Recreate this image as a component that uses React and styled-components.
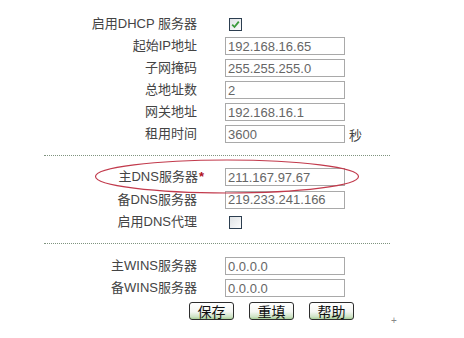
import React from "react";
import styled, { createGlobalStyle } from "styled-components";

const Global = createGlobalStyle`
  html, body { margin: 0; padding: 0; background: #fff; }
  body { font-family: "Liberation Sans", "Noto Sans CJK SC", sans-serif; font-size: 13px; color: #444; }
`;

const Page = styled.div`
  position: relative;
  width: 464px;
  height: 338px;
  padding-top: 15px;
  box-sizing: border-box;
`;

const Section = styled.div`
  display: flex;
  flex-direction: column;
  gap: ${(p) => p.$gap || 4}px;
`;

const Row = styled.div`
  display: flex;
  align-items: center;
  height: 18px;
`;

const Label = styled.div`
  flex: none;
  width: 197px;
  text-align: right;
  white-space: nowrap;
  color: #444;
  line-height: 18px;
`;

const Star = styled.span`
  color: #b01020;
  font-weight: bold;
  margin-right: -7px;
  margin-left: 1px;
`;

const Field = styled.div`
  display: flex;
  align-items: center;
  margin-left: 28px;
`;

const Input = styled.input`
  box-sizing: border-box;
  width: 120px;
  height: 18px;
  border: 1px solid #a9a9a9;
  padding: 0 2px;
  font-family: "Liberation Sans", "Noto Sans CJK SC", sans-serif;
  font-size: 13px;
  color: #666;
  background: #fff;
  outline: none;
`;

const Unit = styled.span`
  margin-left: 4px;
  color: #444;
`;

const Box = styled.span`
  box-sizing: border-box;
  display: inline-flex;
  align-items: center;
  justify-content: center;
  width: 13px;
  height: 13px;
  margin-left: 4px;
  border: 1px solid #2c3e50;
  background: linear-gradient(135deg, #dfe3e6, #fbfbfb);
`;

const Divider = styled.div`
  margin: ${(p) => p.$top}px 0 ${(p) => p.$bottom}px 44px;
  width: 346px;
  border-top: 1px dotted #7f937f;
`;

const Buttons = styled.div`
  display: flex;
  align-items: center;
  gap: 15px;
  margin-top: 5px;
  margin-left: 189px;
`;

const Button = styled.button`
  box-sizing: border-box;
  width: 45px;
  height: 18px;
  padding: 0;
  border: 1px solid #2d2d2d;
  border-radius: 3px;
  background: linear-gradient(#ffffff 0%, #f4f6f2 55%, #cfe3c6 85%, #a8cf98 100%);
  font-family: "Noto Sans CJK SC", sans-serif;
  font-size: 14px;
  line-height: 15px;
  color: #111;
`;

const Plus = styled.span`
  align-self: flex-end;
  margin: 0 0 -6px 22px;
  font-size: 10px;
  color: #888;
`;

const Ellipse = styled.svg`
  position: absolute;
  left: 94px;
  top: 159px;
  pointer-events: none;
`;

const Check = () => (
  <svg width="9" height="9" viewBox="0 0 9 9">
    <path d="M1.2 4.6 L3.5 7 L7.8 1.6" fill="none" stroke="#3a9a3a" strokeWidth="1.8" />
  </svg>
);

const TextRow = ({ label, value, unit, star }) => (
  <Row>
    <Label>
      {label}
      {star && <Star>*</Star>}
    </Label>
    <Field>
      <Input defaultValue={value} />
      {unit && <Unit>{unit}</Unit>}
    </Field>
  </Row>
);

const CheckRow = ({ label, checked }) => (
  <Row>
    <Label>{label}</Label>
    <Field>
      <Box>{checked && <Check />}</Box>
    </Field>
  </Row>
);

export default function App() {
  return (
    <Page>
      <Global />
      <Section>
        <CheckRow label="启用DHCP 服务器" checked />
        <TextRow label="起始IP地址" value="192.168.16.65" />
        <TextRow label="子网掩码" value="255.255.255.0" />
        <TextRow label="总地址数" value="2" />
        <TextRow label="网关地址" value="192.168.16.1" />
        <TextRow label="租用时间" value="3600" unit="秒" />
      </Section>
      <Divider $top={12} $bottom={12} />
      <Section $gap={4.5}>
        <TextRow label="主DNS服务器" value="211.167.97.67" star />
        <TextRow label="备DNS服务器" value="219.233.241.166" />
        <CheckRow label="启用DNS代理" />
      </Section>
      <Divider $top={12} $bottom={13} />
      <Section>
        <TextRow label="主WINS服务器" value="0.0.0.0" />
        <TextRow label="备WINS服务器" value="0.0.0.0" />
      </Section>
      <Buttons>
        <Button>保存</Button>
        <Button>重填</Button>
        <Button>帮助</Button>
        <Plus>+</Plus>
      </Buttons>
      <Ellipse width="268" height="36" viewBox="0 0 268 36">
        <ellipse cx="133" cy="17.5" rx="131.5" ry="16.5" fill="none" stroke="#c23a4c" strokeWidth="1.2" />
      </Ellipse>
    </Page>
  );
}
